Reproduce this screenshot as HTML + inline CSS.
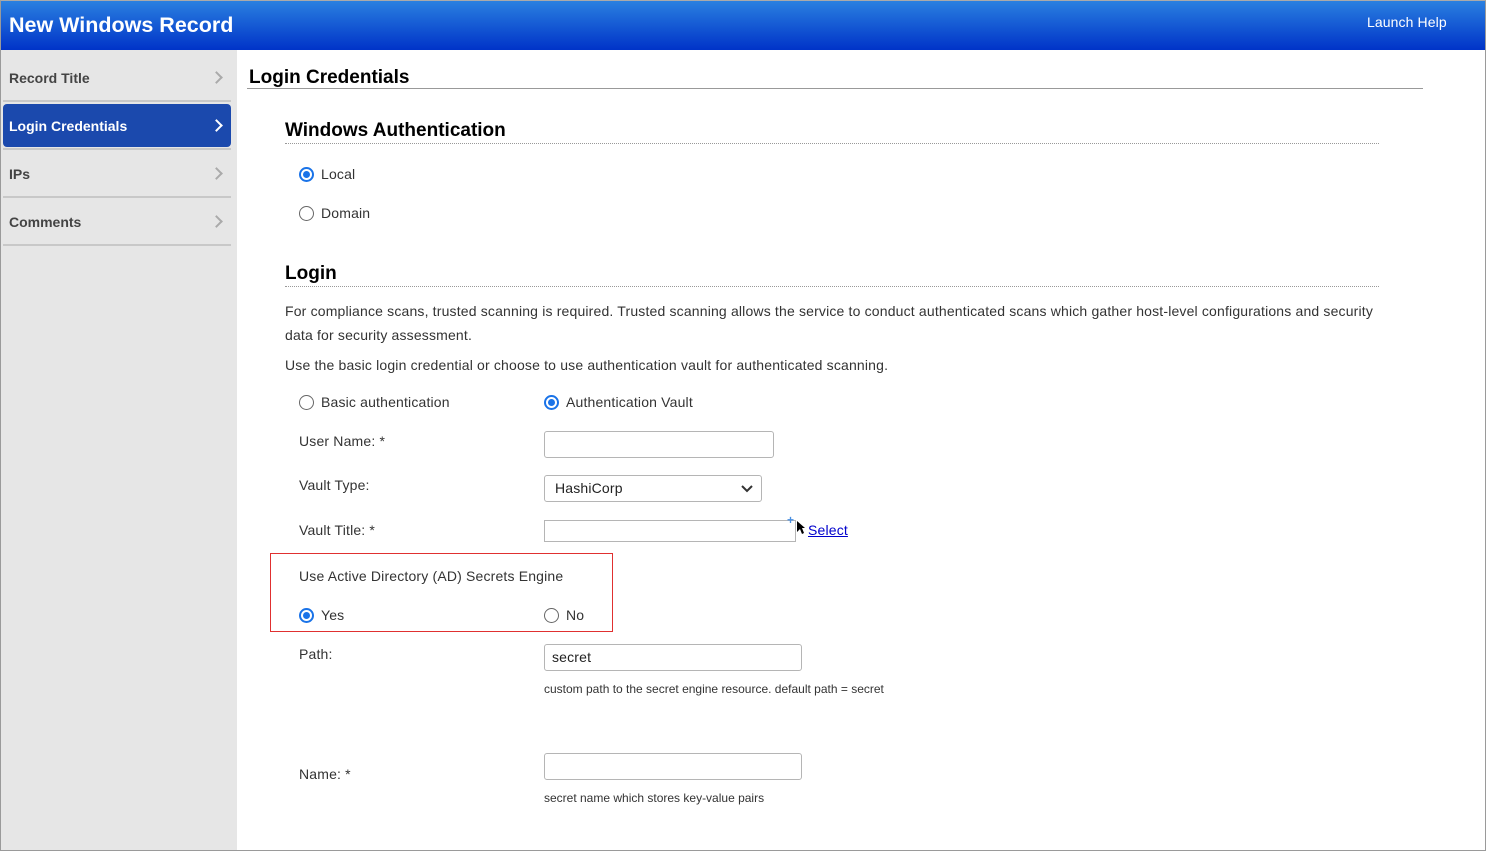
<!DOCTYPE html>
<html><head><meta charset="utf-8"><style>
*{margin:0;padding:0;box-sizing:border-box}
body{width:1486px;height:851px;overflow:hidden;background:#fff;font-family:"Liberation Sans",Arial,sans-serif;color:#333;position:relative}
.frame{position:absolute;left:0;top:0;width:1486px;height:851px;border:1px solid #9a9a9a;border-top-color:#aaa}
.hdr{position:absolute;left:1px;top:1px;width:1484px;height:49px;background:linear-gradient(#2a80e0,#0033c8)}
.t{position:absolute;white-space:nowrap;line-height:20px}
.side{position:absolute;left:1px;top:50px;width:236px;height:800px;background:#e6e6e6}
.div{position:absolute;left:3px;width:228px;height:2px;background:#c8c8c8}
.nav{font-size:14px;font-weight:bold;color:#444}
.chev{position:absolute;width:9px;height:9px;border-right:2px solid #aaa;border-top:2px solid #aaa;transform:rotate(45deg)}
.radio{position:absolute;width:15px;height:15px;border-radius:50%;border:1px solid #666;background:#fff}
.radio.on{border:2px solid #1a73e8}
.radio.on::after{content:"";position:absolute;left:2px;top:2px;width:7px;height:7px;border-radius:50%;background:#1a73e8}
.inp{position:absolute;border:1px solid #b5b5b5;border-radius:3px;background:#fff;height:27px;font-size:14px;padding-left:7px;line-height:25px;color:#222}
.f14{font-size:14px;letter-spacing:0.17px}
.small{font-size:12px;color:#333}
.h{font-size:19px;line-height:22px;font-weight:bold;color:#000}
</style></head><body>
<div class="frame"></div>
<div class="hdr"></div>
<div class="t" style="left:9px;top:12px;font-size:21.5px;line-height:26px;font-weight:bold;color:#fff">New Windows Record</div>
<div class="t" style="left:1367px;top:12px;font-size:14px;color:#fff;letter-spacing:0.1px">Launch Help</div>

<div class="side"></div>
<div class="t nav" style="left:9px;top:68px">Record Title</div>
<div class="chev" style="left:212px;top:73px"></div>
<div class="div" style="top:100px"></div>
<div style="position:absolute;left:3px;top:104px;width:228px;height:43px;background:#1b49ad;border-radius:4px"></div>
<div class="t nav" style="left:9px;top:116px;color:#fff">Login Credentials</div>
<div class="chev" style="left:212px;top:121px;border-color:#fff"></div>
<div class="div" style="top:148px"></div>
<div class="t nav" style="left:9px;top:164px">IPs</div>
<div class="chev" style="left:212px;top:169px"></div>
<div class="div" style="top:196px"></div>
<div class="t nav" style="left:9px;top:212px">Comments</div>
<div class="chev" style="left:212px;top:217px"></div>
<div class="div" style="top:244px"></div>

<div class="t h" style="left:249px;top:67px">Login Credentials</div>
<div style="position:absolute;left:247px;top:88px;width:1176px;height:1px;background:#999"></div>

<div class="t h" style="left:285px;top:120px">Windows Authentication</div>
<div style="position:absolute;left:285px;top:143px;width:1094px;border-top:1px dotted #999"></div>
<div class="radio on" style="left:299px;top:167px"></div>
<div class="t f14" style="left:321px;top:164px">Local</div>
<div class="radio" style="left:299px;top:206px"></div>
<div class="t f14" style="left:321px;top:203px">Domain</div>

<div class="t h" style="left:285px;top:263px">Login</div>
<div style="position:absolute;left:285px;top:286px;width:1094px;border-top:1px dotted #999"></div>
<div class="t f14" style="left:285px;top:301px">For compliance scans, trusted scanning is required. Trusted scanning allows the service to conduct authenticated scans which gather host-level configurations and security</div>
<div class="t f14" style="left:285px;top:325px">data for security assessment.</div>
<div class="t f14" style="left:285px;top:355px">Use the basic login credential or choose to use authentication vault for authenticated scanning.</div>
<div class="radio" style="left:299px;top:395px"></div>
<div class="t f14" style="left:321px;top:392px">Basic authentication</div>
<div class="radio on" style="left:544px;top:395px"></div>
<div class="t f14" style="left:566px;top:392px">Authentication Vault</div>

<div class="t f14" style="left:299px;top:431px">User Name: *</div>
<div class="inp" style="left:544px;top:431px;width:230px"></div>
<div class="t f14" style="left:299px;top:475px">Vault Type:</div>
<div class="inp" style="left:544px;top:475px;width:218px;padding-left:10px;letter-spacing:0.17px">HashiCorp</div>
<svg style="position:absolute;left:740px;top:484px" width="14" height="10"><path d="M2 2 L7 7 L12 2" fill="none" stroke="#333" stroke-width="2"/></svg>
<div class="t f14" style="left:299px;top:520px">Vault Title: *</div>
<div class="inp" style="left:544px;top:520px;width:252px;height:22px;border-radius:0"></div>
<div class="t" style="left:787px;top:514px;font-size:12px;line-height:12px;color:#4a8fe0;font-weight:bold">+</div>
<svg style="position:absolute;left:796px;top:520px" width="10" height="16"><path d="M1 1 L1 12 L4 9 L6 14 L8 13 L6 8 L9 8 Z" fill="#000"/></svg>
<div class="t f14" style="left:808px;top:520px;color:#00c;text-decoration:underline">Select</div>

<div style="position:absolute;left:270px;top:553px;width:343px;height:79px;border:1px solid #e03030"></div>
<div class="t f14" style="left:299px;top:566px">Use Active Directory (AD) Secrets Engine</div>
<div class="radio on" style="left:299px;top:608px"></div>
<div class="t f14" style="left:321px;top:605px">Yes</div>
<div class="radio" style="left:544px;top:608px"></div>
<div class="t f14" style="left:566px;top:605px">No</div>

<div class="t f14" style="left:299px;top:644px">Path:</div>
<div class="inp" style="left:544px;top:644px;width:258px;letter-spacing:0.17px">secret</div>
<div class="t small" style="left:544px;top:679px">custom path to the secret engine resource. default path = secret</div>

<div class="t f14" style="left:299px;top:764px">Name: *</div>
<div class="inp" style="left:544px;top:753px;width:258px"></div>
<div class="t small" style="left:544px;top:788px">secret name which stores key-value pairs</div>
</body></html>
